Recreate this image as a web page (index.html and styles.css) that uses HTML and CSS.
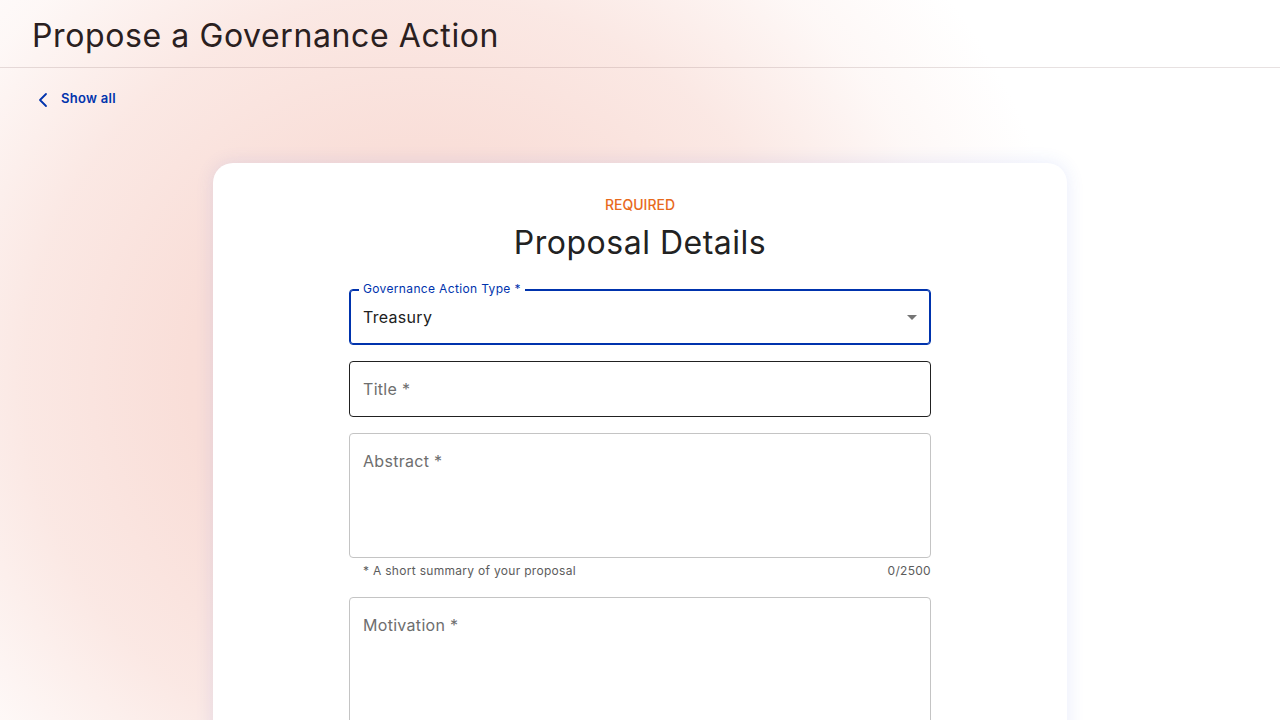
FILE: index.html
```html
<!DOCTYPE html>
<html lang="en">
<head>
<meta charset="utf-8">
<title>Propose a Governance Action</title>
<link rel="stylesheet" href="styles.css">
</head>
<body>
<div class="page">
  <header class="topbar">
    <h1 class="page-title">Propose a Governance Action</h1>
  </header>
  <nav class="back">
    <a class="back-link" href="#">
      <svg class="chev" width="12" height="16" viewBox="0 0 12 16" aria-hidden="true"><polyline points="9,2 3,8 9,14" fill="none" stroke="#0033ad" stroke-width="1.8" stroke-linecap="round" stroke-linejoin="round"/></svg>
      <span>Show all</span>
    </a>
  </nav>
  <main class="main">
    <section class="card">
      <div class="eyebrow">REQUIRED</div>
      <h2 class="card-title">Proposal Details</h2>
      <form class="form">
        <div class="field select focused">
          <span class="float-label">Governance Action Type *</span>
          <span class="value">Treasury</span>
          <svg class="arrow" width="24" height="24" viewBox="0 0 24 24" aria-hidden="true"><path d="M7 10l5 5 5-5z" fill="#757575"/></svg>
        </div>
        <div class="field hover">
          <span class="placeholder">Title *</span>
        </div>
        <div class="group">
          <div class="field area abstract">
            <span class="placeholder">Abstract *</span>
          </div>
          <div class="helper">
            <span>* A short summary of your proposal</span>
            <span>0/2500</span>
          </div>
        </div>
        <div class="field area motivation">
          <span class="placeholder">Motivation *</span>
        </div>
      </form>
    </section>
  </main>
</div>
</body>
</html>
```

FILE: styles.css
```css
* { box-sizing: border-box; }
html, body { margin: 0; padding: 0; }
body {
  width: 1280px;
  height: 720px;
  overflow: hidden;
  font-family: "Inter", "Open Sans", sans-serif;
  background: #ffffff;
}
.page {
  width: 1280px;
  height: 720px;
  background:
    radial-gradient(ellipse 660px 640px at 420px 380px,
      rgba(249, 220, 213, 1) 0%,
      rgba(249, 222, 216, 1) 35%,
      rgba(250, 228, 223, 0.85) 60%,
      rgba(252, 239, 236, 0.45) 82%,
      rgba(255, 255, 255, 0) 100%);
  display: flex;
  flex-direction: column;
}
.topbar {
  height: 68px;
  border-bottom: 1px solid rgba(120, 90, 90, 0.18);
  display: flex;
  align-items: center;
  padding: 0 32px;
  flex-shrink: 0;
}
.page-title {
  margin: 0;
  font-size: 32px;
  font-weight: 400;
  color: #2a2020;
  letter-spacing: 0.6px;
  line-height: 40px;
  padding-top: 4px;
}
.back {
  padding: 20px 0 0 37px;
  height: 62px;
  flex-shrink: 0;
}
.back-link {
  display: inline-flex;
  align-items: center;
  gap: 12px;
  text-decoration: none;
  color: #0033ad;
  font-size: 13px;
  font-weight: 600;
  line-height: 20px;
  letter-spacing: 0.3px;
}
.back-link .chev { margin-top: 3px; }
.main {
  display: flex;
  justify-content: center;
  padding-top: 33px;
  flex: 1;
}
.card {
  width: 854px;
  background: #ffffff;
  border-radius: 20px;
  box-shadow: 0 0 18px rgba(60, 90, 220, 0.12);
  padding: 32px 136px 40px;
  display: flex;
  flex-direction: column;
  align-items: center;
  height: 700px;
}
.eyebrow {
  font-size: 14px;
  line-height: 20px;
  font-weight: 500;
  color: #e8691c;
  letter-spacing: 0;
}
.card-title {
  margin: 8px 0 26px;
  font-size: 32px;
  line-height: 40px;
  font-weight: 400;
  color: #222222;
  letter-spacing: 0.5px;
}
.form {
  width: 582px;
  display: flex;
  flex-direction: column;
  gap: 16px;
}
.field {
  position: relative;
  height: 56px;
  border: 1px solid #c4c4c4;
  border-radius: 4px;
  padding: 0 6px 0 13px;
  display: flex;
  align-items: center;
  font-size: 16px;
  line-height: 24px;
  background: #ffffff;
  letter-spacing: 0.3px;
}
.field.focused {
  border-color: #0033ad;
  box-shadow: inset 0 0 0 1px #0033ad;
}
.field.hover { border-color: #212121; }
.select { justify-content: space-between; }
.value { color: #212121; }
.arrow { display: block; margin-top: 0; }
.float-label {
  position: absolute;
  left: 9px;
  top: -10px;
  padding: 0 4px;
  background: #ffffff;
  font-size: 12px;
  line-height: 18px;
  color: #0033ad;
  letter-spacing: 0.35px;
}
.placeholder { color: #6e6e6e; }
.area {
  align-items: flex-start;
  padding-top: 15px;
}
.abstract { height: 125px; }
.motivation { height: 160px; }
.group { display: flex; flex-direction: column; }
.helper {
  display: flex;
  justify-content: space-between;
  margin-top: 3px;
  padding-left: 14px;
  font-size: 12px;
  line-height: 20px;
  color: #5c5c5c;
  letter-spacing: 0.3px;
}
```
